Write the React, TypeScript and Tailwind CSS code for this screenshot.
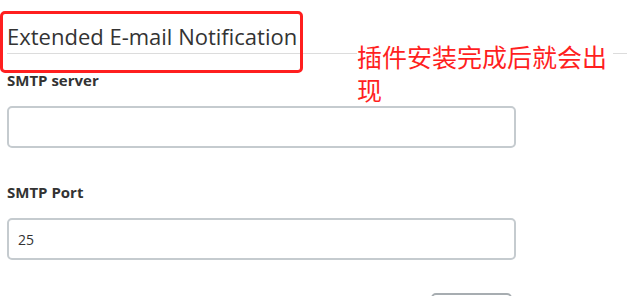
import React from "react";

const sans = "font-['Open_Sans','Noto_Sans',sans-serif]";

function Field({ label, value }: { label: string; value?: string }) {
  return (
    <div className="mb-[34px]">
      <div className="text-[15px] leading-[20px] font-bold text-[#333] mb-[16px]">{label}</div>
      <input
        readOnly
        value={value ?? ""}
        className="block w-full h-[42px] rounded-[5px] border-2 border-[#c5cbcf] bg-white px-[9px] text-[14px] text-[#333] outline-none"
      />
    </div>
  );
}

export default function App() {
  return (
    <div className={`relative w-[627px] h-[296px] overflow-hidden bg-white ${sans}`}>
      <div className="pl-[7px] pr-[111px]">
        {/* 区块标题 */}
        <h3 className="pt-[21px] pb-[2px] text-[22px] leading-[30px] font-normal text-[#333] border-b border-[#dcdcdc] w-[620px]">
          Extended E-mail Notification
        </h3>
        <div className="pt-[16px]">
          <Field label="SMTP server" />
          <Field label="SMTP Port" value="25" />
          <div className="flex justify-end pr-[4px] -mt-[1px]">
            <div className="w-[81px] h-[30px] rounded-[5px] border-2 border-[#a7adb1] bg-white" />
          </div>
        </div>
      </div>

      {/* 标注 */}
      <div className="absolute left-0 top-[11px] w-[303px] h-[62px] rounded-[5px] border-[3px] border-[#ff1f1f]" />
      <div className="absolute left-[357px] top-[40px] w-[256px] bg-white text-[25px] leading-[33px] text-[#ff1f1f] font-['Noto_Sans_CJK_SC',sans-serif]">
        插件安装完成后就会出现
      </div>
    </div>
  );
}
